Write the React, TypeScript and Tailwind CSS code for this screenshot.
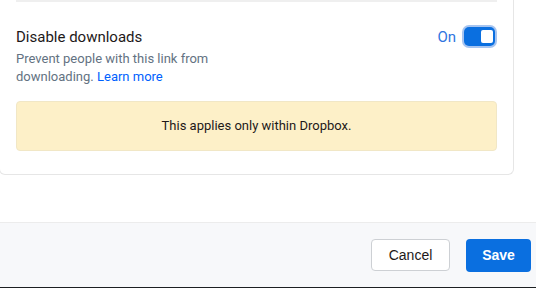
import React from "react";

const App: React.FC = () => {
    return (
        <div className="w-[536px] h-[288px] flex flex-col bg-white overflow-hidden font-['Roboto',sans-serif]">
            {/* SETTINGS CARD */}
            <div className="h-[222px]">
                <div className="-ml-px w-[515px] border-x border-b border-[#e6e6e6] rounded-b-md px-4 pb-[23px]">
                    <div className="h-[2px] bg-[#efefef]" />
                    <div className="flex justify-between mt-[23px]">
                        <div>
                            <h3 className="text-[15px] leading-6 text-[#1e1919]">Disable downloads</h3>
                            <p className="mt-px text-[13px] leading-[18px] text-[#637282] w-[210px]">
                                Prevent people with this link from downloading.{" "}
                                <a href="#" className="text-[#0061fe]">Learn more</a>
                            </p>
                        </div>
                        <div className="flex items-center gap-[6px] h-[23px]">
                            <span className="text-[15px] text-[#2f75e0] leading-6">On</span>
                            <button className="w-[35px] h-[23px] p-[2px] rounded-[7px] bg-[#a6c4f0]">
                                <span className="flex items-center justify-end w-full h-full pr-[2px] rounded-[5px] bg-[#0a6fe0]">
                                    <span className="w-3 h-[13px] bg-white rounded-[2px]" />
                                </span>
                            </button>
                        </div>
                    </div>
                    <div className="mt-[15px] h-[50px] flex items-center justify-center rounded border border-[#f1e7c6] bg-[#fdf0c8] text-[13px] text-[#1e1919]">
                        This applies only within Dropbox.
                    </div>
                </div>
            </div>

            {/* FOOTER */}
            <footer className="h-[65px] border-t border-[#ececec] bg-[#f7f8fa] flex justify-end items-start gap-4 pt-4 pr-[5px] font-['Liberation_Sans',Arial,sans-serif]">
                <button className="w-[79px] h-8 rounded border border-[#cdd0d4] bg-white text-[14px] text-[#1e1919]">
                    Cancel
                </button>
                <button className="w-[65px] h-[33px] rounded bg-[#0a6fe0] text-[14px] font-bold text-white">
                    Save
                </button>
            </footer>
            <div className="h-px bg-[#1c1f22]" />
        </div>
    );
};

export default App;
